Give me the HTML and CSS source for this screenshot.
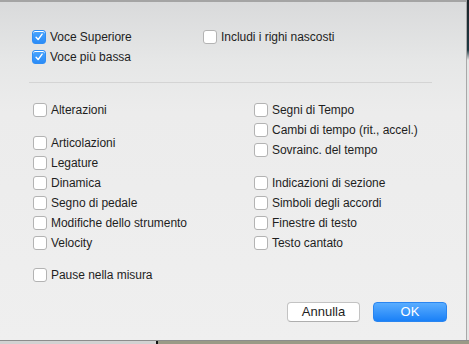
FILE: index.html
```html
<!DOCTYPE html>
<html>
<head>
<meta charset="utf-8">
<link rel="stylesheet" href="styles.css">
</head>
<body>
<div class="screen">
  <div class="dialog">
    <div class="top">
      <div class="top-col top-left">
        <label class="row"><span class="cb checked"><svg viewBox="0 0 14 14"><path d="M3.6 7.4 L6 10 L10.6 3.6" fill="none" stroke="#fff" stroke-width="1.7" stroke-linecap="round" stroke-linejoin="round"/></svg></span><span class="lbl">Voce Superiore</span></label>
        <label class="row"><span class="cb checked"><svg viewBox="0 0 14 14"><path d="M3.6 7.4 L6 10 L10.6 3.6" fill="none" stroke="#fff" stroke-width="1.7" stroke-linecap="round" stroke-linejoin="round"/></svg></span><span class="lbl">Voce più bassa</span></label>
      </div>
      <div class="top-col top-right">
        <label class="row"><span class="cb"></span><span class="lbl">Includi i righi nascosti</span></label>
      </div>
    </div>
    <div class="sep"></div>
    <div class="lists">
      <div class="col col-left">
        <div class="group">
          <label class="row"><span class="cb"></span><span class="lbl">Alterazioni</span></label>
        </div>
        <div class="group">
          <label class="row"><span class="cb"></span><span class="lbl">Articolazioni</span></label>
          <label class="row"><span class="cb"></span><span class="lbl">Legature</span></label>
          <label class="row"><span class="cb"></span><span class="lbl">Dinamica</span></label>
          <label class="row"><span class="cb"></span><span class="lbl">Segno di pedale</span></label>
          <label class="row"><span class="cb"></span><span class="lbl">Modifiche dello strumento</span></label>
          <label class="row"><span class="cb"></span><span class="lbl">Velocity</span></label>
        </div>
        <div class="group">
          <label class="row"><span class="cb"></span><span class="lbl">Pause nella misura</span></label>
        </div>
      </div>
      <div class="col col-right">
        <div class="group">
          <label class="row"><span class="cb"></span><span class="lbl">Segni di Tempo</span></label>
          <label class="row"><span class="cb"></span><span class="lbl">Cambi di tempo (rit., accel.)</span></label>
          <label class="row"><span class="cb"></span><span class="lbl">Sovrainc. del tempo</span></label>
        </div>
        <div class="group">
          <label class="row"><span class="cb"></span><span class="lbl">Indicazioni di sezione</span></label>
          <label class="row"><span class="cb"></span><span class="lbl">Simboli degli accordi</span></label>
          <label class="row"><span class="cb"></span><span class="lbl">Finestre di testo</span></label>
          <label class="row"><span class="cb"></span><span class="lbl">Testo cantato</span></label>
        </div>
      </div>
    </div>
    <div class="buttons">
      <button class="btn btn-cancel">Annulla</button>
      <button class="btn btn-ok">OK</button>
    </div>
  </div>
  <div class="edge-right"></div>
</div>
<div class="edge-bottom"><div class="eb-a"></div><div class="eb-line"></div><div class="eb-b"></div></div>
</body>
</html>
```
FILE: styles.css
```css
* { box-sizing: border-box; }
html, body { margin: 0; padding: 0; }
body {
  width: 469px;
  height: 344px;
  overflow: hidden;
  font-family: "Liberation Sans", Arial, sans-serif;
  font-size: 12px;
  color: #1e1e1e;
  background: #d0d0d0;
}
.screen {
  display: flex;
  height: 340px;
}
.dialog {
  width: 467px;
  height: 340px;
  border-top: 2px solid #a4a4a4;
  border-right: 1px solid #a8a8a8;
  background: linear-gradient(to bottom, #d9dadb 0px, #e6e7e7 60px, #ececec 110px, #efefef 340px);
  display: flex;
  flex-direction: column;
}
.edge-right {
  width: 2px;
  background: linear-gradient(to bottom, #1c2328 0, #1e3a44 50px, #e6e6e6 60px, #e6e6e6 340px);
}
.edge-bottom {
  height: 4px;
  display: flex;
  background: #c4c4c4;
  border-top: 1px solid #8c8c8c;
}
.eb-a { width: 156px; background: #d2d2d2; }
.eb-line { width: 2px; background: #111; }
.eb-b { flex: 1; background: #9a9a86; }

.top {
  display: flex;
  padding: 25px 0 0 32px;
}
.top-left { width: 171px; }
.sep {
  height: 1px;
  background: #d4d4d4;
  margin: 15px 34px 17px 29px;
}
.lists {
  display: flex;
  padding-left: 33px;
}
.col-left { width: 221px; }
.group + .group { margin-top: 13px; }
.col-left .group:last-child { margin-top: 12px; }

.row {
  display: flex;
  align-items: center;
  height: 20px;
  white-space: nowrap;
  letter-spacing: -0.03px;
}
.cb {
  width: 14px;
  height: 14px;
  border: 1px solid #b3b3b3;
  border-radius: 3px;
  background: #fff;
  margin-right: 4px;
  flex: none;
  box-shadow: inset 0 1px 0 #fff;
}
.cb.checked {
  border: 1px solid #2f8ef5;
  background: linear-gradient(to bottom, #4aa5fd, #2b8cf7);
  display: flex;
}
.cb svg { width: 12px; height: 12px; }

.buttons {
  display: flex;
  justify-content: flex-end;
  gap: 13px;
  padding-right: 19px;
  margin-top: 17px;
}
.btn {
  font-family: "Liberation Sans", Arial, sans-serif;
  font-size: 13px;
  height: 20px;
  width: 74px;
  border-radius: 4px;
  padding: 0;
  line-height: 18px;
}
.btn-cancel {
  width: 73px;
  background: #fff;
  border: 1px solid #c3c3c3;
  border-bottom-color: #aeaeae;
  color: #1e1e1e;
}
.btn-ok {
  background: linear-gradient(to bottom, #5aadff, #1a80f7);
  border: 1px solid #2a85f0;
  color: #fff;
}
```
